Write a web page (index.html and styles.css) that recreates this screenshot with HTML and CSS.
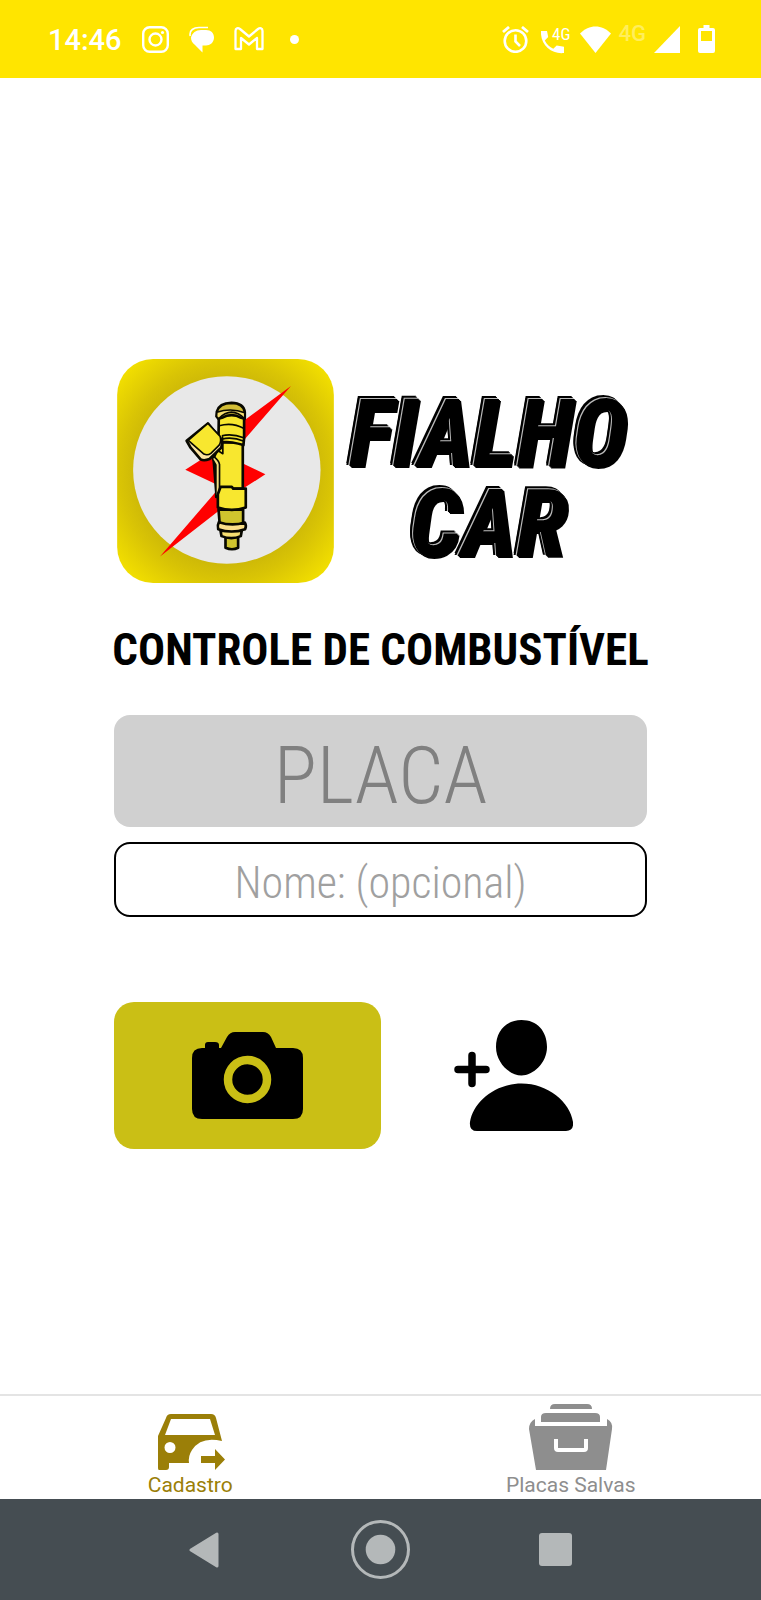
FILE: index.html
```html
<!DOCTYPE html>
<html lang="pt-BR">
<head>
<meta charset="utf-8">
<meta name="viewport" content="width=device-width, initial-scale=1">
<title>Fialho Car</title>
<link rel="stylesheet" href="styles.css">
</head>
<body>
<header class="status">
  <div class="status-left">
    <span class="clock">14:46</span>
    <svg width="27" height="27" viewBox="0 0 27 27" fill="none" stroke="#fff"><rect x="1.2" y="1.2" width="24.6" height="24.6" rx="6.5" stroke-width="2.4"/><circle cx="13.5" cy="13.5" r="6" stroke-width="2.4"/><circle cx="20.5" cy="6.5" r="1.6" fill="#fff" stroke="none"/></svg>
    <svg width="25" height="27" viewBox="0 0 25 27"><path d="M1.200 10C0 4 5 1.500 10 1.500h9" fill="none" stroke="#fff" stroke-width="1.600"/><path d="M12 4h5c5 0 8 3 8 7.500 0 5-4 8-8 8h-3.500v7L6 19C3 17 2 14 2 11.500 3 7 7 4 12 4z" fill="#fff"/></svg>
    <svg class="mail" width="30" height="24" viewBox="0 0 30 24"><path d="M1.500 4C1.500 1 4 .500 6 2l9 7.500L24 2c2-1.500 4.500-1 4.500 2v18h-5.500V11L15 17.500 7 11v11H1.500z" fill="none" stroke="#fff" stroke-width="2.300" stroke-linejoin="round"/></svg>
    <svg width="9" height="9" viewBox="0 0 9 9"><circle cx="4.500" cy="4.500" r="4.500" fill="#fff"/></svg>
  </div>
  <div class="status-right">
    <svg class="alarm" width="27" height="27" viewBox="0 0 27 27" fill="none" stroke="#fff"><circle cx="13.500" cy="15" r="10.800" stroke-width="2.600"/><path d="M13.500 8.500V15.500l4.500 4.500" stroke-width="2.600"/><path d="M1 6L7 1M26 6L20 1" stroke-width="2.800"/></svg>
    <svg class="call" width="31" height="30" viewBox="0 0 31 30"><path d="M0 7h6l1.200 6-3.400 3.400c2 3.800 4.800 6.600 8.500 8.300l3.400-3.200 7.300 1.200V29C11 30.500-1 21 0 7z" fill="#fff"/><text x="11" y="16" class="call-net">4G</text></svg>
    <svg width="31" height="27" viewBox="0 0 31 27"><path d="M0 7.500C9-2 22-2 31 7.500L15.500 27z" fill="#fff"/></svg>
    <span class="net">4G</span>
    <svg width="26" height="27" viewBox="0 0 26 27"><path d="M26 0v27H0z" fill="#fff"/></svg>
    <svg class="battery" width="17" height="28" viewBox="0 0 17 28"><path fill-rule="evenodd" d="M5.500 0h6v3H15a2 2 0 0 1 2 2v21a2 2 0 0 1-2 2H2a2 2 0 0 1-2-2V5a2 2 0 0 1 2-2h3.500zM3 6v10h11V6z" fill="#fff"/></svg>
  </div>
</header>

<main class="main">
  <div class="content">
    <div class="brand">
      <svg class="brand-icon" viewBox="35 27 652 674" role="img" aria-label="Bico injetor">
        <defs><radialGradient id="tile" cx=".5" cy=".5" r=".68"><stop offset=".5" stop-color="#c3ae0a"/><stop offset=".72" stop-color="#d9c405"/><stop offset=".95" stop-color="#f3e000"/></radialGradient></defs>
        <rect x="35" y="27" width="652" height="674" rx="108" fill="url(#tile)"/>
        <circle cx="365" cy="361" r="282" fill="#e8e8e8"/>
        <path d="M558 108L414 214 398 292 415 342 481 374 400 426 340 484 164 621 334 424 336 405 240 360 300 322 400 290z" fill="#f00"/>
        <g stroke="#080800" stroke-width="8" stroke-linejoin="round">
          <path d="M340 480l4 50h70v-50z" fill="#cfc42e"/>
          <path d="M361 562v33q20 9 38 0v-33z" fill="#cfc42e"/>
          <path d="M346 544l3 16q30 12 58 0l3-16z" fill="#f6df70"/>
          <path d="M341 518q-5 9-2 21 40 14 81 0 5-10-1-20-38 12-78-1z" fill="#fbe08a"/>
          <path d="M345 278l-20 48 8 100v16l12-2v-22h68V278z" fill="#f8e72f"/>
          <path d="M322 328l10 18v88q0 8 11 6V344q-2-12-18-24z" fill="#f6df80" stroke-width="5"/>
          <path d="M338 434l8-22h34l4 5h38v57q-42 14-84 0z" fill="#f8e72f"/>
          <path d="M341 188h76v76l-2 22q-32-10-68-10l-7-12z" fill="#f8e72f"/>
          <path d="M335 185q7-25 44-26 37 1 40 28v20l-11-3q-28-16-58 0l-10 3-6-7z" fill="#d2bd36"/>
          <path d="M335 187q44-14 84 2v18q-40-40-79 0l-6-7z" fill="#f6df70" stroke-width="5"/>
          <path d="M342 228q38-12 75 8M350 258q30-8 66 6M350 268q32-8 65 6M352 258v16" fill="none" stroke-width="5"/>
          <path d="M308 221l-64 52 12 21 30 35q10 6 27-1l35-34q5-15-2-28z" fill="#fbe3a0"/>
          <path d="M308 221l37 39q4 15-3 26l-25 25q-10 7-21 2l-47-41z" fill="#f8e72f" stroke-width="5"/>
          <path d="M353 276v36l-14-9" fill="none" stroke-width="5"/>
        </g>
      </svg>
      <h1 class="brand-name"><span>FIALHO</span><span>CAR</span></h1>
    </div>
    <h2 class="title">CONTROLE DE COMBUSTÍVEL</h2>
    <form class="form">
      <input class="field plate" type="text" aria-label="Placa" placeholder="PLACA">
      <input class="field name" type="text" aria-label="Nome" placeholder="Nome: (opcional)">
      <div class="actions">
        <button class="camera" type="button" aria-label="Fotografar placa">
          <svg width="111" height="87" viewBox="0 0 111 87"><path d="M10 16h3v-3q0-3 3-3h7q4 0 4 3v3h2L35 5q3-5 8-5h28q5 0 8 5l5 11h17q10 0 10 10v51q0 10-10 10H10Q0 87 0 77V26Q0 16 10 16z"/><circle cx="55.500" cy="47.500" r="19.500" fill="none" stroke="#cabf15" stroke-width="8.500"/></svg>
        </button>
        <button class="add" type="button" aria-label="Adicionar pessoa">
          <svg width="119" height="111" viewBox="0 0 119 111"><path d="M67.500 0C83 0 93 11 93 27 93 43 79 55.500 67.500 55.500 56 55.500 42 43 42 27 42 11 52 0 67.500 0zM67.500 63.500C94 63.500 116 82 119 102q1 9-7 9H23q-8 0-7-9C19 82 41 63.500 67.500 63.500z"/><path d="M18 35.500v28M4 49.500h28" stroke="#000" stroke-width="7.500" stroke-linecap="round"/></svg>
        </button>
      </div>
    </form>
  </div>
</main>

<nav class="tabs">
  <a class="tab active" href="#cadastro">
    <svg width="72" height="56" viewBox="-4 0 72 56"><path fill="currentColor" fill-rule="evenodd" d="M13 0h40q4 0 5 4l6 23q-21-5-30 9-4 6-3 13H11v4q0 3-3 3H1q-1 0-1-2V22L8 4q1-4 5-4zM13 5L7 21h50L52 5zM12 28a5.500 5.500 0 1 0 0 11 5.500 5.500 0 0 0 0-11z"/><path fill="currentColor" d="M43 42h14v-7l10 10.500L57 56v-7H43z"/></svg>
    <span>Cadastro</span>
  </a>
  <a class="tab" href="#placas">
    <svg width="84" height="66" viewBox="0 0 84 66"><path fill="currentColor" d="M21 5q0-5 5-5h32q5 0 5 5zM12 18v-5q0-4 5-4h49q5 0 5 4v5z"/><path fill="currentColor" fill-rule="evenodd" d="M6 15v7h72v-7q6 3 5 10l-6 41H7L0 25q0-7 6-10zM25 35v9q0 4 4 4h26q4 0 4-4v-9h-4v9H29v-9z"/></svg>
    <span>Placas Salvas</span>
  </a>
</nav>

<footer class="system">
  <button type="button" aria-label="Voltar"><svg width="34" height="36" viewBox="0 0 34 36"><path d="M28 2v32L2 18z" fill="#b4b8b9" stroke="#b4b8b9" stroke-width="3" stroke-linejoin="round"/></svg></button>
  <button type="button" aria-label="Início"><svg width="59" height="59" viewBox="0 0 59 59"><circle cx="29.500" cy="29.500" r="28" fill="none" stroke="#b4b8b9" stroke-width="3"/><circle cx="29.500" cy="29.500" r="14.800" fill="#b4b8b9"/></svg></button>
  <button type="button" aria-label="Recentes"><svg width="33" height="33" viewBox="0 0 33 33"><rect width="33" height="33" rx="3" fill="#b4b8b9"/></svg></button>
</footer>
</body>
</html>
```
FILE: styles.css
```css
* {
  box-sizing: border-box;
}

body {
  margin: 0;
  min-height: 100vh;
  display: flex;
  flex-direction: column;
  background: #fff;
  color: #000;
  font-family: Roboto, "Liberation Sans", sans-serif;
}

svg {
  display: block;
  flex: none;
}

button {
  padding: 0;
  border: 0;
  background: none;
}

.status {
  height: 78px;
  padding: 0 46px 0 48px;
  display: flex;
  justify-content: space-between;
  align-items: center;
  background: #ffe500;
  color: #fff;
}

.status-left,
.status-right {
  display: flex;
  align-items: center;
}

.status-left {
  gap: 20px;
}

.status-right {
  gap: 8px;
}

.clock {
  padding-top: 2px;
  font-size: 29px;
  font-weight: 500;
  line-height: 32px;
}

.mail {
  margin-right: 6px;
}

.alarm {
  margin-right: 4px;
}

.call-net {
  font: 400 17px "Roboto Condensed", Roboto, sans-serif;
  fill: #fff;
}

.net {
  padding-bottom: 10px;
  font-size: 22px;
  font-weight: 500;
  line-height: 24px;
  color: #ffee5c;
}

.battery {
  margin-left: 10px;
}

.main {
  flex: 1;
  display: flex;
  justify-content: center;
  padding: 281px 0 32px;
}

.content {
  width: 70%;
}

.brand {
  display: flex;
  align-items: center;
  gap: 12px;
  padding: 0 16px 0 3px;
}

.brand-icon {
  width: 217px;
  height: 224px;
}

.brand-name {
  flex: 1;
  margin: 0;
  padding-top: 16px;
  display: flex;
  flex-direction: column;
  align-items: center;
  font-family: "Roboto Condensed", "Liberation Sans Narrow", Roboto, sans-serif;
  font-size: 94px;
  font-style: italic;
  font-weight: 800;
  line-height: 90px;
  text-shadow:
    -1px -1px 0 #bbb,
    -2px -2px 0 #000,
    -3px -3px 0 #000,
    -3px -1px 0 #000,
    1px 1px 0 #000,
    2px 2px 0 #000;
}

.title {
  margin: 43px 0 0;
  display: flex;
  justify-content: center;
  font-family: "Roboto Condensed", "Liberation Sans Narrow", Roboto, sans-serif;
  font-size: 45px;
  font-weight: 700;
  line-height: 48px;
  white-space: nowrap;
}

.form {
  margin-top: 41px;
  display: flex;
  flex-direction: column;
  gap: 15px;
}

.field {
  width: 100%;
  padding: 0;
  font-family: "Roboto Condensed", "Liberation Sans Narrow", Roboto, sans-serif;
  font-weight: 300;
  text-align: center;
}

.field::placeholder {
  opacity: 1;
}

.plate {
  height: 112px;
  padding-top: 10px;
  border: 0;
  border-radius: 16px;
  background: #d0d0d0;
  font-size: 80px;
}

.plate::placeholder {
  color: #808080;
}

.name {
  height: 75px;
  padding-top: 6px;
  border: 2px solid #000;
  border-radius: 16px;
  background: #fff;
  font-size: 44px;
}

.name::placeholder {
  color: #a0a0a0;
}

.actions {
  margin-top: 70px;
  display: grid;
  grid-template-columns: 1fr 1fr;
  height: 147px;
}

.camera,
.add {
  display: flex;
  align-items: center;
  justify-content: center;
}

.camera {
  border-radius: 20px;
  background: #cabf15;
}

.tabs {
  height: 105px;
  display: grid;
  grid-template-columns: 1fr 1fr;
  border-top: 2px solid #e4e4e4;
}

.tab {
  display: flex;
  flex-direction: column;
  align-items: center;
  justify-content: flex-end;
  gap: 3px;
  padding-bottom: 2px;
  color: #8e8e8e;
  font-size: 21px;
  line-height: 24px;
  text-decoration: none;
}

.tab.active {
  color: #9b7f08;
}

.system {
  height: 101px;
  display: flex;
  align-items: center;
  justify-content: center;
  gap: 116px;
  background: #454d52;
}

.system button {
  width: 59px;
  display: flex;
  justify-content: center;
}
```
